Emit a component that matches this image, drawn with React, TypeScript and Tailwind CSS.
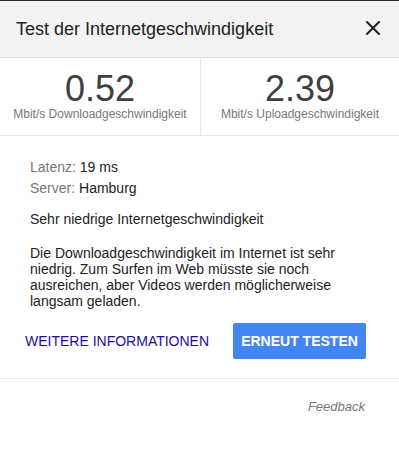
export default function App() {
  return (
    <div
      className="w-[399px] h-[465px] bg-white text-[#222] overflow-hidden"
      style={{ fontFamily: '"Liberation Sans", Arial, sans-serif' }}
    >
      {/* Header */}
      <div className="h-[58px] bg-[#f2f2f2] border-t border-b border-t-[#2b2b2b] border-b-[#dcdcdc] flex items-center justify-between pl-4 pr-[19px]">
        <h1 className="text-[18px] leading-none text-[#222]">
          Test der Internetgeschwindigkeit
        </h1>
        <svg width="14" height="14" viewBox="0 0 14 14" className="mt-[-2px]">
          <path
            d="M1 1 L13 13 M13 1 L1 13"
            stroke="#222"
            strokeWidth="2"
            strokeLinecap="square"
          />
        </svg>
      </div>

      {/* Stats */}
      <div className="grid grid-cols-[201px_1fr] border-b border-[#e6e6e6]">
        <div className="flex flex-col items-center pt-[13px] pb-[14px] border-r border-[#e6e6e6]">
          <span className="text-[36px] leading-[36px] text-[#404040]">0.52</span>
          <span className="text-[12px] leading-[14px] text-[#777]">
            Mbit/s Downloadgeschwindigkeit
          </span>
        </div>
        <div className="flex flex-col items-center pt-[13px] pb-[14px]">
          <span className="text-[36px] leading-[36px] text-[#404040]">2.39</span>
          <span className="text-[12px] leading-[14px] text-[#777]">
            Mbit/s Uploadgeschwindigkeit
          </span>
        </div>
      </div>

      {/* Details */}
      <div className="pt-[21px] pl-[30px] pr-[33px] text-[14px]">
        <div className="leading-[21px]">
          <span className="text-[#777]">Latenz:</span> 19 ms
        </div>
        <div className="leading-[21px]">
          <span className="text-[#777]">Server:</span> Hamburg
        </div>
        <p className="mt-3 leading-4">Sehr niedrige Internetgeschwindigkeit</p>
        <p className="mt-[18px] leading-4">
          Die Downloadgeschwindigkeit im Internet ist sehr niedrig. Zum Surfen
          im Web müsste sie noch ausreichen, aber Videos werden möglicherweise
          langsam geladen.
        </p>
      </div>

      {/* Actions */}
      <div className="flex items-center justify-between pl-[25px] pr-[33px] mt-[14px] pb-[19px] border-b border-[#e6e6e6]">
        <button className="text-[14px] leading-none text-[#1a0dab]">
          WEITERE INFORMATIONEN
        </button>
        <button className="w-[133px] h-9 rounded-[2px] bg-[#4285f4] text-white text-[14px] font-bold leading-none">
          ERNEUT TESTEN
        </button>
      </div>

      {/* Feedback */}
      <div className="flex justify-end pr-[34px] pt-5">
        <span className="text-[13px] italic text-[#777] leading-4">Feedback</span>
      </div>
    </div>
  );
}
